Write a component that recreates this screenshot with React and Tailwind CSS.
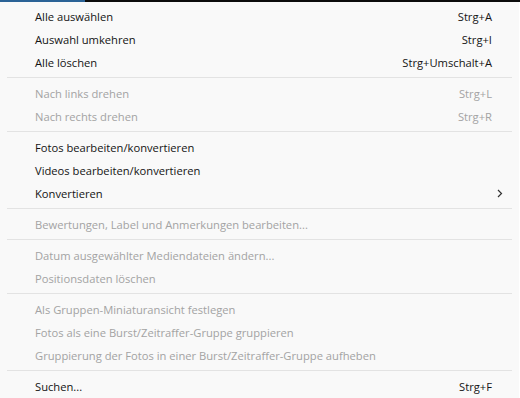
import React from 'react';

const items = [
    { label: 'Alle auswählen', key: 'Strg+A' },
    { label: 'Auswahl umkehren', key: 'Strg+I' },
    { label: 'Alle löschen', key: 'Strg+Umschalt+A' },
    'sep',
    { label: 'Nach links drehen', key: 'Strg+L', disabled: true },
    { label: 'Nach rechts drehen', key: 'Strg+R', disabled: true },
    'sep',
    { label: 'Fotos bearbeiten/konvertieren' },
    { label: 'Videos bearbeiten/konvertieren' },
    { label: 'Konvertieren', sub: true },
    'sep',
    { label: 'Bewertungen, Label und Anmerkungen bearbeiten...', disabled: true },
    'sep',
    { label: 'Datum ausgewählter Mediendateien ändern...', disabled: true },
    { label: 'Positionsdaten löschen', disabled: true },
    'sep',
    { label: 'Als Gruppen-Miniaturansicht festlegen', disabled: true },
    { label: 'Fotos als eine Burst/Zeitraffer-Gruppe gruppieren', disabled: true },
    { label: 'Gruppierung der Fotos in einer Burst/Zeitraffer-Gruppe aufheben', disabled: true },
    'sep',
    { label: 'Suchen...', key: 'Strg+F' },
];

const App = () => {
    return (
        <div className="w-[520px] h-[398px] overflow-hidden bg-white font-['Open_Sans',sans-serif]">
            {/* Window strip behind the menu */}
            <div className="flex h-[2px]">
                <div className="w-[85px] bg-[#2b6396]"></div>
                <div className="flex-1 bg-[#0c0c0c]"></div>
            </div>

            <div className="w-[519px] h-[396px] bg-[#f9f9f9] pt-[3px]">
                {items.map((item, i) =>
                    item === 'sep' ? (
                        <div key={i} className="pt-[3px] pb-[4px] px-[7px]">
                            <div className="h-px bg-[#e3e3e3]"></div>
                        </div>
                    ) : (
                        <div
                            key={i}
                            className={`flex items-center h-[23px] pl-[35px] pr-[27px] text-[11.2px] leading-none ${
                                item.disabled ? 'text-[#a3a3a3]' : 'text-[#141414]'
                            }`}
                        >
                            <span className="flex-1 whitespace-nowrap">{item.label}</span>
                            {item.key && <span className="whitespace-nowrap">{item.key}</span>}
                            {item.sub && (
                                <svg width="6" height="9" viewBox="0 0 6 9" className="mr-[-11px]">
                                    <path d="M1 1 L4.5 4.5 L1 8" fill="none" stroke="#333" strokeWidth="1.2" />
                                </svg>
                            )}
                        </div>
                    )
                )}
            </div>
        </div>
    );
};

export default App;
